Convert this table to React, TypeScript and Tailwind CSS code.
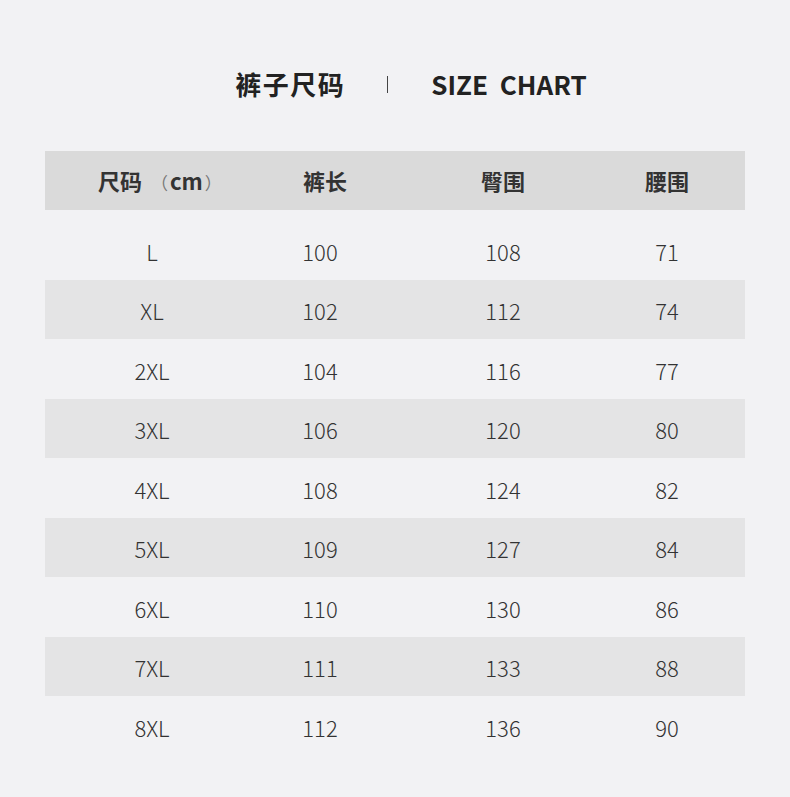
const rows = [
  ['L', '100', '108', '71'],
  ['XL', '102', '112', '74'],
  ['2XL', '104', '116', '77'],
  ['3XL', '106', '120', '80'],
  ['4XL', '108', '124', '82'],
  ['5XL', '109', '127', '84'],
  ['6XL', '110', '130', '86'],
  ['7XL', '111', '133', '88'],
  ['8XL', '112', '136', '90'],
]

const font = { fontFamily: '"Noto Sans CJK SC", "Noto Sans", sans-serif' }

const App = () => {
  return (
    <div style={font} className="h-[797px] w-[790px] bg-[#f2f2f4] text-[#333]">
      {/* title */}
      <div className="flex h-[151px] items-start justify-center pl-[32px] pt-[65px]">
        <div className="flex items-center">
          <span className="text-[26px] font-bold leading-[38px] tracking-[1.5px] text-[#222]">裤子尺码</span>
          <span className="ml-[42px] mr-[43px] h-[17px] w-px bg-[#444]" />
          <span className="text-[26px] font-bold leading-[38px] text-[#222]">SIZE&nbsp;&nbsp;CHART</span>
        </div>
      </div>

      {/* table */}
      <div className="mx-[45px] w-[700px]">
        <div className="grid h-[59px] grid-cols-[214px_122px_244px_84px] items-center bg-[#dadada] pb-[1px] text-[22px] font-bold text-[#333]">
          <div className="flex items-baseline pl-[53px]">
            <span>尺码</span>
            <span className="ml-[9px] mr-[2px] text-[17px] font-normal text-[#777]">（</span>
            <span>cm</span>
            <span className="ml-[2px] text-[17px] font-normal text-[#777]">）</span>
          </div>
          <div className="pl-[10px] text-center">裤长</div>
          <div className="text-center">臀围</div>
          <div className="text-center">腰围</div>
        </div>

        <div className="mt-[10px]">
          {rows.map((r, i) => (
            <div
              key={r[0]}
              className={`grid h-[59.5px] grid-cols-[214px_122px_244px_84px] items-center text-[22px] font-light text-[#333] ${
                i % 2 === 1 ? 'bg-[#e4e4e5]' : ''
              }`}
            >
              <div className="pt-[3px] text-center">{r[0]}</div>
              <div className="pt-[3px] text-center">{r[1]}</div>
              <div className="pt-[3px] text-center">{r[2]}</div>
              <div className="pt-[3px] text-center">{r[3]}</div>
            </div>
          ))}
        </div>
      </div>
    </div>
  )
}

export default App
